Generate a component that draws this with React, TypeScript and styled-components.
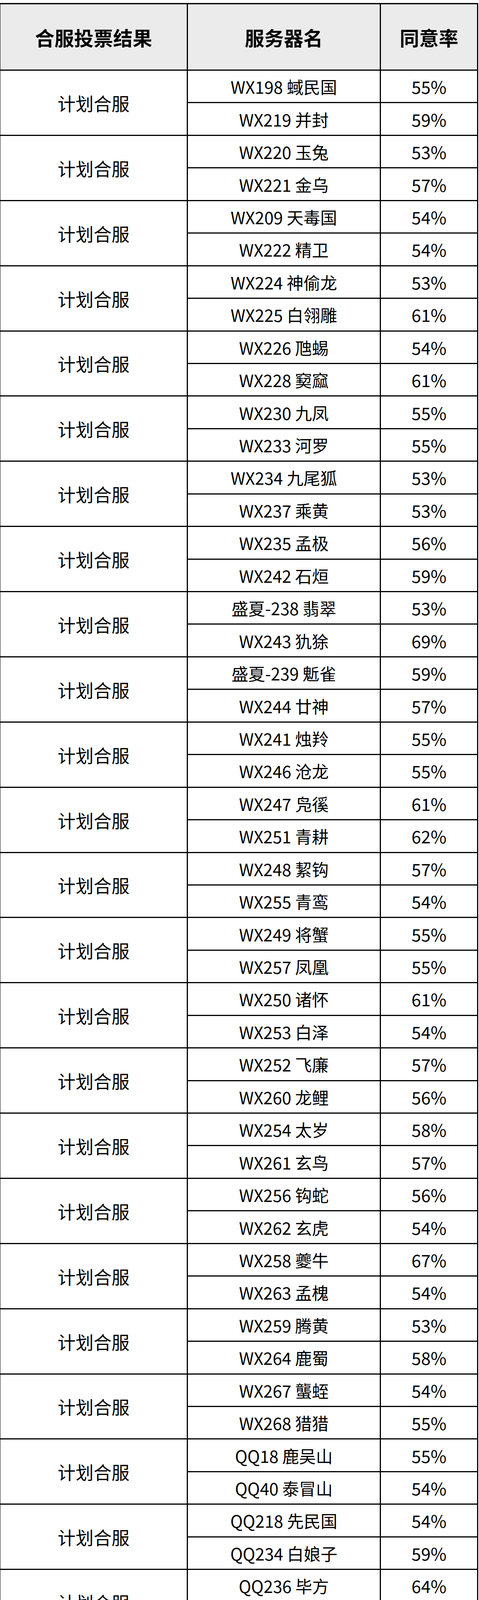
import React from "react";
import styled, { createGlobalStyle } from "styled-components";

const GlobalStyle = createGlobalStyle`
  html, body {
    margin: 0;
    padding: 0;
    background: #ffffff;
  }
  body {
    font-family: "Noto Sans CJK SC", "Noto Sans", sans-serif;
    color: #000;
  }
`;

const Page = styled.div`
  padding-top: 8px;
  padding-bottom: 20px;
`;

const Table = styled.div`
  display: grid;
  grid-template-columns: 480px 494px 249px;
  grid-template-rows: 170px;
  grid-auto-rows: 83.45px;
  width: max-content;
  margin-left: -2px;
  border-top: 3px solid #000;
  border-left: 3px solid #000;
  box-shadow: 0 -1px 0 #b8b8b8;
`;

const Cell = styled.div<{ $span?: number }>`
  display: flex;
  align-items: center;
  justify-content: center;
  box-sizing: border-box;
  border-right: 3px solid #000;
  border-bottom: 3px solid #000;
  white-space: nowrap;
  overflow: hidden;
  grid-row: ${(p) => (p.$span ? `span ${p.$span}` : "auto")};
`;

const HeadCell = styled(Cell)`
  background: #ebebeb;
  font-size: 50px;
  font-weight: 700;
`;

const ResultCell = styled(Cell)`
  font-size: 46px;
`;

const ServerCell = styled(Cell)`
  font-size: 43px;
`;

const RateCell = styled(Cell)`
  font-size: 44px;
`;

type Pair = [string, number, string, number];

const groups: Pair[] = [
  ["WX198 蜮民国", 55, "WX219 并封", 59],
  ["WX220 玉兔", 53, "WX221 金乌", 57],
  ["WX209 天毒国", 54, "WX222 精卫", 54],
  ["WX224 神偷龙", 53, "WX225 白翎雕", 61],
  ["WX226 虺蜴", 54, "WX228 窫窳", 61],
  ["WX230 九凤", 55, "WX233 河罗", 55],
  ["WX234 九尾狐", 53, "WX237 乘黄", 53],
  ["WX235 孟极", 56, "WX242 石烜", 59],
  ["盛夏-238 翡翠", 53, "WX243 犰狳", 69],
  ["盛夏-239 鬿雀", 59, "WX244 廿神", 57],
  ["WX241 烛羚", 55, "WX246 沧龙", 55],
  ["WX247 凫徯", 61, "WX251 青耕", 62],
  ["WX248 絜钩", 57, "WX255 青鸾", 54],
  ["WX249 将蟹", 55, "WX257 凤凰", 55],
  ["WX250 诸怀", 61, "WX253 白泽", 54],
  ["WX252 飞廉", 57, "WX260 龙鲤", 56],
  ["WX254 太岁", 58, "WX261 玄鸟", 57],
  ["WX256 钩蛇", 56, "WX262 玄虎", 54],
  ["WX258 夔牛", 67, "WX263 孟槐", 54],
  ["WX259 腾黄", 53, "WX264 鹿蜀", 58],
  ["WX267 蠪蛭", 54, "WX268 猎猎", 55],
  ["QQ18 鹿吴山", 55, "QQ40 泰冒山", 54],
  ["QQ218 先民国", 54, "QQ234 白娘子", 59],
  ["QQ236 毕方", 64, "QQ238 夫诸", 54],
  ["QQ239 赤翎雕", 54, "QQ240 鼍龙", 53],
  ["QQ242 朏朏", 70, "QQ243 貔貅", 59],
  ["QQ246 三青鸟", 59, "QQ247 麒麟", 55],
  ["QQ250 蛮蛮", 53, "盛夏-252 鸣蛇", 55],
  ["QQ254 厌火兽", 60, "QQ255 瞿如", 67],
  ["QQ256 鼍围", 54, "QQ258 猰貐", 53],
  ["QQ259 从从", 61, "QQ261 骨龙", 53],
  ["QQ260 金腹蟹王", 54, "QQ262 旋龟", 54],
  ["QQ263 九婴", 53, "QQ264 婴胡", 53],
  ["QQ265 氐人", 59, "QQ266 武赢", 54],
  ["QQ267 开明兽", 53, "QQ268 獙獙", 54],
  ["QQ276 天愚", 53, "QQ278 孟鸟", 53],
];

export default function App() {
  return (
    <>
      <GlobalStyle />
      <Page>
        <Table>
          <HeadCell>合服投票结果</HeadCell>
          <HeadCell>服务器名</HeadCell>
          <HeadCell>同意率</HeadCell>
          {groups.map(([a, ra, b, rb], i) => (
            <React.Fragment key={i}>
              <ResultCell $span={2}>计划合服</ResultCell>
              <ServerCell>{a}</ServerCell>
              <RateCell>{ra}%</RateCell>
              <ServerCell>{b}</ServerCell>
              <RateCell>{rb}%</RateCell>
            </React.Fragment>
          ))}
        </Table>
      </Page>
    </>
  );
}
